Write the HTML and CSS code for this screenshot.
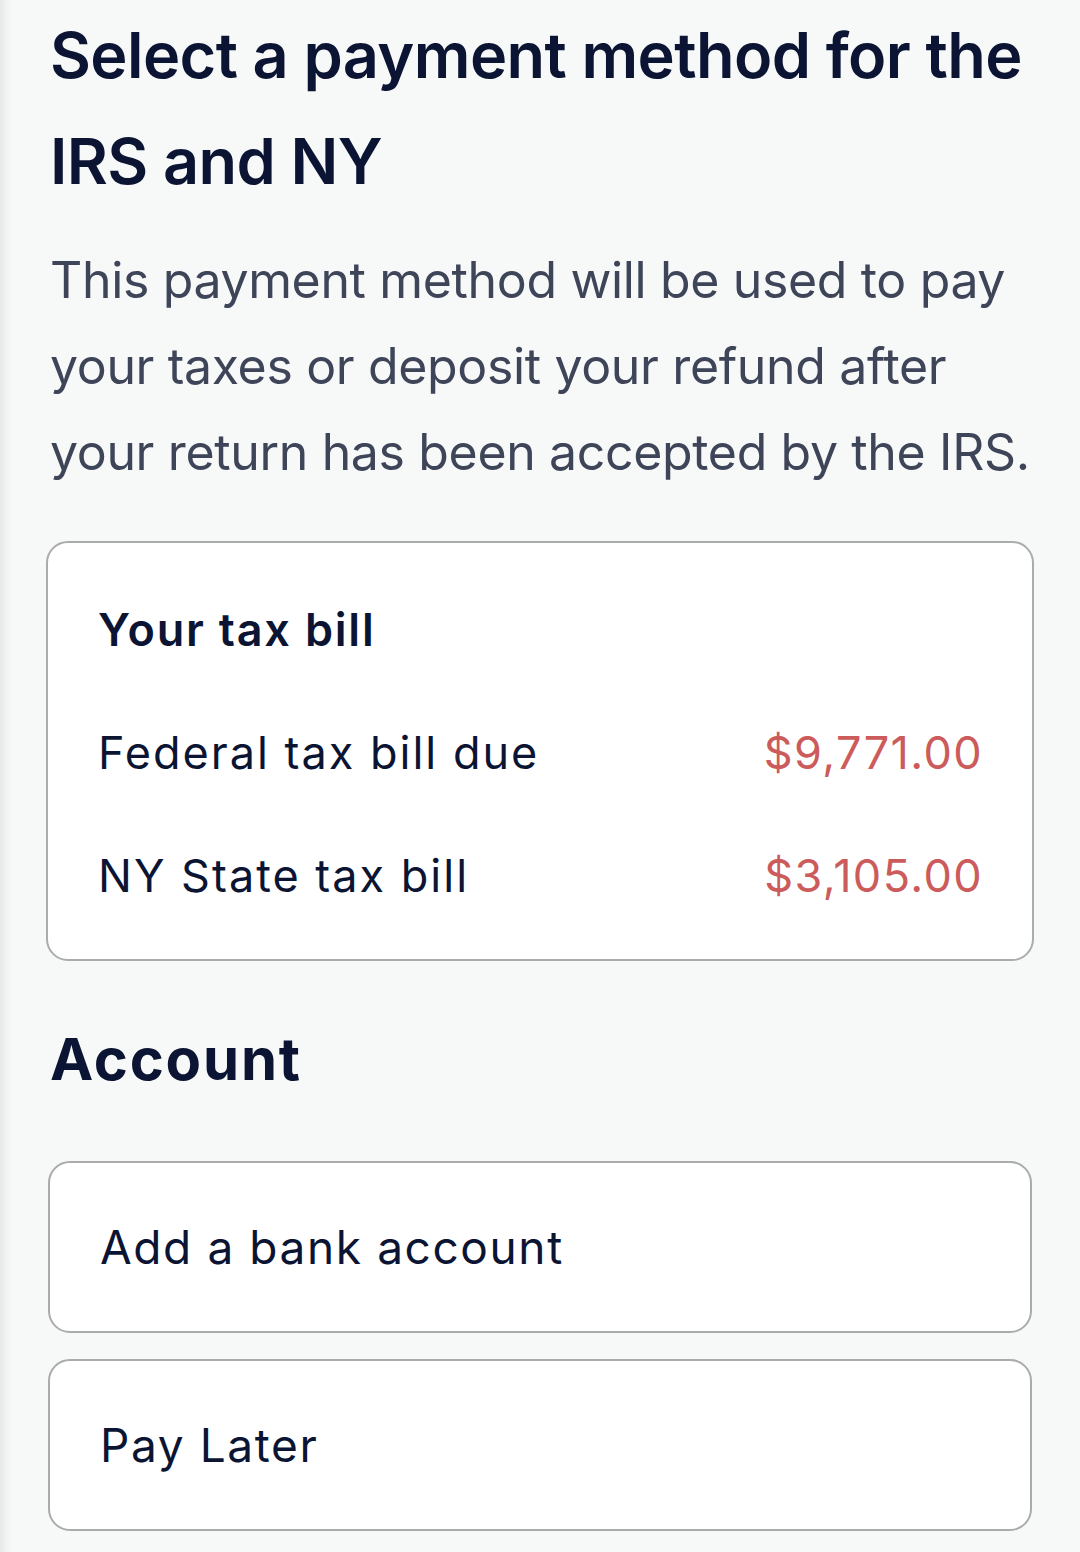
FILE: index.html
```html
<!DOCTYPE html>
<html lang="en">
<head>
<meta charset="utf-8">
<title>Select a payment method</title>
<link rel="stylesheet" href="styles.css">
</head>
<body>
<main class="page">
  <h1 class="title">Select a payment method for the IRS and NY</h1>
  <p class="lead">This payment method will be used to pay your taxes or deposit your refund after your return has been accepted by the IRS.</p>

  <section class="bill-card">
    <h2 class="bill-title">Your tax bill</h2>
    <div class="bill-row">
      <span class="bill-label">Federal tax bill due</span>
      <span class="bill-amount">$9,771.00</span>
    </div>
    <div class="bill-row">
      <span class="bill-label">NY State tax bill</span>
      <span class="bill-amount">$3,105.00</span>
    </div>
  </section>

  <h2 class="section-title">Account</h2>
  <div class="options">
    <div class="option">Add a bank account</div>
    <div class="option">Pay Later</div>
  </div>
</main>
</body>
</html>
```

FILE: styles.css
```css
html, body {
  margin: 0;
  padding: 0;
}
body {
  background: linear-gradient(to right, #e6e7e7 0, #f1f2f2 6px, #f7f8f8 12px, #f7f8f8 100%);
  font-family: Inter, "Noto Sans", sans-serif;
  color: #0b1533;
  min-height: 1552px;
}
.page {
  padding: 0 20px 0 50px;
  display: flex;
  flex-direction: column;
}
.title {
  margin: 2px 0 0 0;
  font-size: 63px;
  line-height: 106px;
  font-weight: 600;
  letter-spacing: -0.6px;
  color: #0b1533;
}
.lead {
  margin: 23px 0 0 0;
  font-size: 50px;
  line-height: 86px;
  font-weight: 400;
  letter-spacing: -0.35px;
  color: #3e4558;
}
.bill-card {
  margin: 46px 26px 0 -4px;
  background: #ffffff;
  border: 2px solid #aaabab;
  border-radius: 22px;
  padding: 59px 50px 55px 50px;
  display: flex;
  flex-direction: column;
  gap: 67px;
}
.bill-title {
  margin: 0;
  font-size: 45px;
  line-height: 56px;
  font-weight: 600;
  letter-spacing: 1.8px;
}
.bill-row {
  display: flex;
  justify-content: space-between;
  align-items: baseline;
  font-size: 45px;
  line-height: 56px;
}
.bill-label {
  letter-spacing: 2px;
}
.bill-amount {
  color: #cc5b5b;
  letter-spacing: 1.4px;
  margin-right: -1px;
}
.section-title {
  margin: 63px 0 0 0;
  font-size: 58px;
  line-height: 70px;
  font-weight: 700;
  letter-spacing: 1.8px;
}
.options {
  margin: 67px 28px 0 -2px;
  display: flex;
  flex-direction: column;
  gap: 26px;
}
.option {
  height: 168px;
  box-sizing: content-box;
  border: 2px solid #aaabab;
  border-radius: 22px;
  background: #ffffff;
  display: flex;
  align-items: center;
  padding: 0 50px;
  font-size: 46px;
  letter-spacing: 1.6px;
  color: #0b1533;
}
```
